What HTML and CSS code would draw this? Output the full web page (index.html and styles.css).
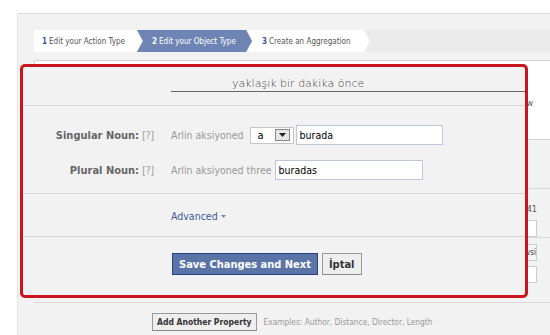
FILE: index.html
```html
<!DOCTYPE html>
<html lang="tr">
<head>
    <meta charset="UTF-8">
    <title>Edit your Object Type</title>
    <link rel="stylesheet" href="styles.css">
</head>
<body>
<div class="panel">
    <div class="steps">
        <div class="step first"><b>1</b> Edit your Action Type</div>
        <div class="step current"><b>2</b> Edit your Object Type</div>
        <div class="step"><b>3</b> Create an Aggregation</div>
    </div>

    <div class="box">
        <span class="peek">Preview</span>
    </div>
    <div class="row row-a"></div>
    <div class="row row-b">
        <span class="peek">Order 41</span>
        <span class="field"></span>
    </div>
    <div class="row row-c">
        <span class="field pick">Varsayılan gösterim tavsi</span>
        <span class="field"></span>
    </div>

    <div class="add-row">
        <button class="btn">Add Another Property</button>
        <span class="hint">Examples: Author, Distance, Director, Length</span>
    </div>
</div>

<!-- dialog sits over the form -->
<div class="dialog">
    <div class="dlg-head">
        <div class="stamp">yaklaşık bir dakika önce</div>
    </div>
    <div class="dlg-form">
        <div class="frow">
            <div class="flabel"><b>Singular Noun:</b> <span class="q">[?]</span></div>
            <div class="fvalue">
                <span class="pre">Arlin aksiyoned</span>
                <span class="select">a<span class="arrow"><svg width="7" height="4" viewBox="0 0 7 4"><path d="M0 0h7L3.5 4z" fill="#222"/></svg></span></span>
                <input class="txt wide" type="text" value="burada">
            </div>
        </div>
        <div class="frow">
            <div class="flabel"><b>Plural Noun:</b> <span class="q">[?]</span></div>
            <div class="fvalue">
                <span class="pre">Arlin aksiyoned three</span>
                <input class="txt" type="text" value="buradas">
            </div>
        </div>
    </div>
    <div class="dlg-adv">
        <a class="adv" href="#">Advanced</a><span class="caret"><svg width="5" height="3" viewBox="0 0 5 3"><path d="M0 0h5L2.5 3z" fill="#6d84b4"/></svg></span>
    </div>
    <div class="dlg-buttons">
        <button class="btn primary">Save Changes and Next</button>
        <button class="btn">İptal</button>
    </div>
</div>
</body>
</html>
```

FILE: styles.css
```css
body { margin: 0; background: #fff; font-family: "DejaVu Sans Condensed", "DejaVu Sans", sans-serif; font-size: 10.5px; color: #333; }

.panel { margin: 13px 0 0 17px; height: 322px; background: #f2f2f2; border-top: 1px solid #dcdcdc; border-left: 1px solid #e6e6e6; padding: 16px 0 0 16px; box-sizing: border-box; }

.steps { display: flex; height: 22px; background: #ebebeb; }
.step { display: flex; align-items: center; height: 22px; width: 123px; margin-left: -5px; padding-left: 15px; box-sizing: border-box; background: #fff; color: #555; font-size: 8px; white-space: nowrap; clip-path: polygon(0 0, calc(100% - 6px) 0, 100% 50%, calc(100% - 6px) 100%, 0 100%, 6px 50%); }
.step b { color: #3b5998; margin-right: 2px; }
.step.first { width: 108px; margin-left: 0; padding-left: 8px; clip-path: polygon(0 0, calc(100% - 6px) 0, 100% 50%, calc(100% - 6px) 100%, 0 100%); }
.step.current { width: 115px; background: #6d84b4; color: #fff; }
.step.current b { color: #fff; }

.box { height: 80px; margin-top: 8px; background: #fff; border: 1px solid #d4d4d4; border-right: none; box-sizing: border-box; display: flex; justify-content: flex-end; align-items: flex-start; padding: 37px 17px 0 0; }
.row { display: flex; flex-direction: column; align-items: flex-end; padding-right: 13px; border-bottom: 1px solid #d8d8d8; box-sizing: border-box; }
.row-a { height: 49px; }
.row-b { height: 49px; padding-top: 15px; gap: 6px; }
.row-c { height: 65px; padding-top: 6px; gap: 5px; }
.peek { color: #555; font-size: 9px; }
.field { display: block; width: 200px; height: 17px; background: #fff; border: 1px solid #ccc; box-sizing: border-box; }
.field.pick { font-size: 8px; line-height: 15px; text-align: right; color: #333; background: #f5f5f5; }

.add-row { display: flex; align-items: center; gap: 7px; margin: 10px 0 0 118px; }
.btn { font-family: inherit; font-weight: bold; font-size: 8.5px; color: #333; background: #eee; border: 1px solid #999; border-bottom-color: #888; padding: 0 4px; height: 18px; cursor: pointer; }
.hint { color: #999; font-size: 8.3px; }

.dialog { position: absolute; left: 20px; top: 64px; width: 508px; height: 234px; box-sizing: border-box; border: 3px solid #c7161d; border-radius: 5px; background: #f2f2f2; }
.dlg-head { height: 39px; padding-top: 11px; box-sizing: border-box; border-bottom: 1px solid #d4d4d4; }
.stamp { margin-left: 148px; height: 13px; line-height: 12px; padding-left: 61px; border-bottom: 1px solid #666; color: #444; font-family: "DejaVu Sans", sans-serif; font-size: 11px; font-weight: 300; }

.dlg-form { height: 88px; padding: 18px 0 12px; box-sizing: border-box; border-bottom: 1px solid #d4d4d4; display: flex; flex-direction: column; gap: 13px; }
.frow { display: flex; align-items: center; height: 22px; }
.flabel { width: 131px; text-align: right; color: #666; font-size: 11px; margin-right: 17px; }
.flabel b { color: #666; }
.q { color: #999; font-size: 10px; }
.fvalue { display: flex; align-items: center; color: #999; font-size: 10.5px; }
.select { display: flex; align-items: center; justify-content: space-between; width: 44px; height: 17px; margin-left: 6px; padding: 0 3px 0 7px; box-sizing: border-box; background: #fff; border: 1px solid #c6c6c6; color: #000; font-size: 11px; }
.arrow { display: flex; align-items: center; justify-content: center; width: 15px; height: 12px; box-sizing: border-box; border: 1px solid #888; background: #e6e6e6; }
.txt { height: 20px; width: 148px; box-sizing: border-box; margin-left: 3px; padding: 0 3px; border: 1px solid #bdc7d8; font-family: inherit; font-size: 10.5px; color: #000; }
.txt.wide { margin-left: 2px; width: 147px; }

.dlg-adv { height: 43px; display: flex; align-items: center; padding: 2px 0 0 148px; border-bottom: 1px solid #d4d4d4; box-sizing: border-box; }
.adv { color: #3b5998; text-decoration: none; font-size: 10.5px; }
.caret { display: flex; margin-left: 3px; }

.dlg-buttons { display: flex; gap: 4px; padding: 16px 0 0 149px; }
.dlg-buttons .btn { height: 22px; font-size: 11px; padding: 0 6px; }
.dlg-buttons .btn.primary { background: #5b74a8; border: 1px solid #29447e; color: #fff; }
```
